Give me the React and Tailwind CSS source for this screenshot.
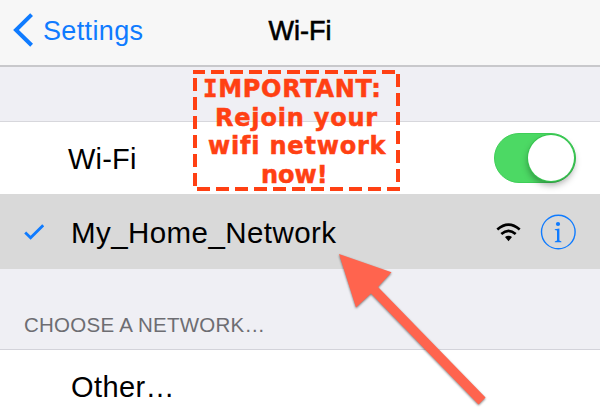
function BackChevron() {
  return (
    <svg className="h-[34px] w-5 shrink-0" viewBox="0 0 20 34" fill="none">
      <path d="M18.6 1.6 3 17 18.6 32.3" stroke="#0f7bff" strokeWidth="4" />
    </svg>
  );
}

function Check() {
  return (
    <svg className="h-4 w-5 shrink-0" viewBox="0 0 20 16" fill="none">
      <path d="M1.2 8.6 6.6 13.8 19.2 1.2" stroke="#0f7bff" strokeWidth="2.8" />
    </svg>
  );
}

function Signal() {
  return (
    <svg className="h-[19px] w-[25px] shrink-0" viewBox="0 0 25 19" fill="none">
      <path d="M1.3 6.6Q12.5 -3.2 23.7 6.6" stroke="#000" strokeWidth="2.6" />
      <path d="M5.3 11Q12.5 4.6 19.7 11" stroke="#000" strokeWidth="2.6" />
      <path d="M9 14.1Q12.5 11.2 16 14.1L12.5 18.2Z" fill="#000" />
    </svg>
  );
}

function Info() {
  return (
    <svg className="h-9 w-9 shrink-0" viewBox="0 0 36 36" fill="none">
      <circle cx="18.3" cy="18" r="16.8" stroke="#0f7bff" strokeWidth="1.4" />
      <circle cx="18" cy="10" r="2.1" fill="#0f7bff" />
      <path d="M14.8 15.3 19.4 14.4V26.6L21.4 27.6V28.2H14.8V27.6L17 26.6V16.4L14.8 16Z" fill="#0f7bff" />
    </svg>
  );
}

function Toggle() {
  return (
    <div className="flex h-[50px] w-[82px] items-center justify-end rounded-full border border-[#3fce58] bg-[#4cd964] pr-px">
      <div className="h-[46px] w-[46px] rounded-full bg-white shadow-[0_0_0_1px_#35c44e,0_4px_7px_rgba(0,0,0,0.35)]" />
    </div>
  );
}

function Notice() {
  return (
    <div className="absolute left-[193px] top-[70px] h-[121px] w-[207px] text-[24px] font-bold leading-[29px] text-[#ff4013] [-webkit-text-stroke:0.5px_#ff4013] [font-family:'DejaVu_Sans',Verdana,sans-serif]">
      <svg className="absolute inset-0 h-full w-full" viewBox="0 0 207 121" stroke="#ff4013" strokeWidth="4">
        <path d="M-1 2H203" strokeDasharray="13 6" />
        <path d="M205 4V116" strokeDasharray="13 6" />
        <path d="M4 119H207" strokeDasharray="13 6" />
        <path d="M2 8V117" strokeDasharray="13 6" />
      </svg>
      <div className="relative flex flex-col items-start whitespace-pre pt-[5px] leading-[28.7px]">
        <span className="ml-[10px] tracking-[0.7px]"><span className="[font-family:'DejaVu_Sans_Mono',monospace]">I</span>MPORTANT:</span>
        <span className="ml-[22px] tracking-[0.8px]">Rejoin your</span>
        <span className="ml-[15px] tracking-[0.8px]">wifi network</span>
        <span className="ml-[68px]">now!</span>
      </div>
    </div>
  );
}

function Arrow() {
  return (
    <svg className="absolute left-[330px] top-[244px] h-[170px] w-[170px] drop-shadow-[0_1px_1px_rgba(0,0,0,0.5)]" viewBox="0 0 170 170">
      <path d="M9 10 61.5 28.2 48 43 155.5 153.5 148.5 160.5 41 49.5 26 63.5Z" fill="#ff644e" />
    </svg>
  );
}

export default function App() {
  return (
    <main className="relative flex h-[417px] w-[600px] flex-col overflow-hidden bg-white text-[29px] leading-[34px] text-black [font-family:'Liberation_Sans',Arial,sans-serif]">
      <header className="grid h-[67px] shrink-0 grid-cols-3 border-b-2 border-[#c8c8cb] bg-[#f7f7f7] pt-[13px] text-[27px]">
        <div className="flex pl-[13px] text-[#0f7bff]">
          <BackChevron />
          <span className="ml-[10px] mt-px tracking-[0.35px]">Settings</span>
        </div>
        <h1 className="mt-px text-center [-webkit-text-stroke:0.6px_black]">Wi-Fi</h1>
      </header>
      <div className="h-[55px] shrink-0 border-b border-[#d7d7dc] bg-[#efeff4]" />
      <section className="flex h-[72px] shrink-0 items-center justify-between pl-[68px] pr-6">
        <span className="mt-[2px] tracking-[0.2px]">Wi-Fi</span>
        <Toggle />
      </section>
      <section className="flex h-[75px] shrink-0 items-center bg-[#d9d9d9] pl-6 pr-6">
        <Check />
        <span className="ml-[27px] mt-[2px] text-[29.5px] tracking-[0.43px]">My_Home_Network</span>
        <span className="ml-auto mt-px"><Signal /></span>
        <span className="ml-[19px]"><Info /></span>
      </section>
      <h2 className="h-[81px] shrink-0 border-b border-[#d3d3da] bg-[#efeff4] pl-[24px] pt-[39px] text-[20.5px] tracking-[0.25px] text-[#6d6d72]">CHOOSE A NETWORK…</h2>
      <section className="pl-[71px] pt-[20px] tracking-[0.4px]">Other…</section>
      <Notice />
      <Arrow />
    </main>
  );
}
